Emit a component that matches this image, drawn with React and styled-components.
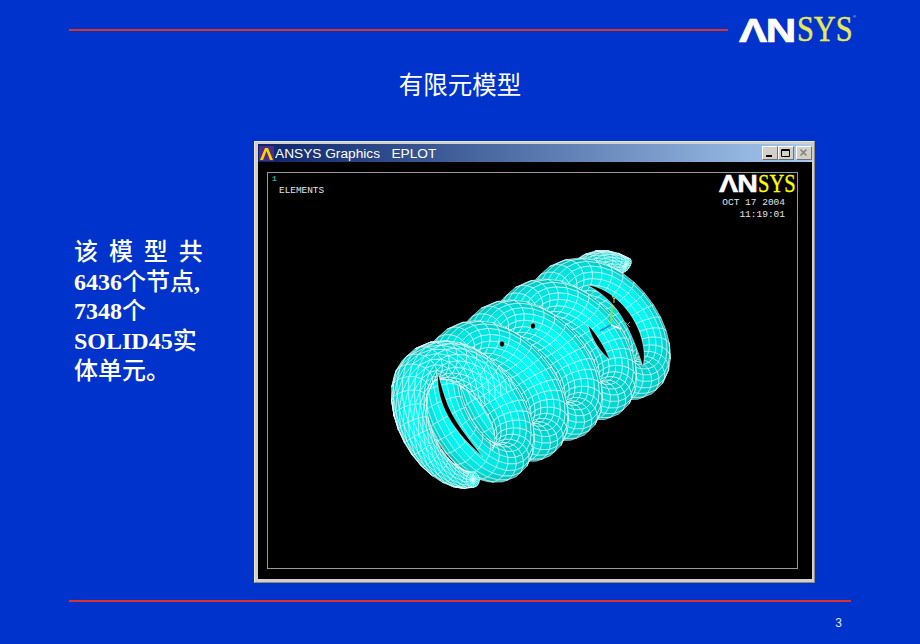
import React, { useMemo } from 'react';
import styled, { createGlobalStyle } from 'styled-components';

const GlobalStyle = createGlobalStyle`
  html, body {
    margin: 0;
    padding: 0;
    background: #0033cc;
  }
`;

const Slide = styled.div`
  width: 920px;
  height: 644px;
  overflow: hidden;
  box-sizing: border-box;
  background: #0033cc;
  padding: 17px 67px 0 69px;
  display: flex;
  flex-direction: column;
  color: #fff;
  font-family: "Liberation Serif", "Noto Sans CJK SC", serif;
`;

const Header = styled.div`
  display: flex;
  align-items: center;
  gap: 11px;
  height: 25px;
`;

const Rule = styled.div`
  height: 2px;
  background: #d8342c;
  flex: ${(p) => (p.$grow ? 1 : 'none')};
  width: ${(p) => (p.$grow ? 'auto' : '782px')};
`;

const LogoWrap = styled.div`
  display: flex;
  align-items: center;
  position: relative;
  font-size: ${(p) => p.$size}px;
  height: 1em;
  line-height: 1;
  margin-right: ${(p) => p.$inset}px;
`;

const LogoSans = styled.span`
  display: inline-block;
  width: 1.7em;
  font-family: "Liberation Sans", sans-serif;
  font-weight: bold;
  font-size: 1em;
  color: #fff;
  letter-spacing: -0.03em;
  -webkit-text-stroke: 0.02em #fff;
  transform: scaleX(1.24);
  transform-origin: left center;
`;

const LogoSerif = styled.span`
  display: inline-block;
  width: 1.57em;
  font-family: "Liberation Serif", serif;
  font-size: 1.05em;
  color: ${(p) => p.$color};
  -webkit-text-stroke: 0.012em ${(p) => p.$color};
  transform: scaleX(0.85);
  transform-origin: left center;
`;

const Reg = styled.span`
  position: absolute;
  left: 100%;
  top: 1px;
  font: 4px "Liberation Sans", sans-serif;
  color: #dfe89a;
`;

const SlideTitle = styled.div`
  margin-top: 27px;
  margin-right: 2px;
  height: 30px;
  line-height: 30px;
  text-align: center;
  font-size: 24.5px;
  font-family: "Noto Sans CJK SC", sans-serif;
`;

const Content = styled.div`
  margin-top: 42px;
  display: flex;
  align-items: flex-start;
`;

const Notes = styled.div`
  width: 185px;
  flex: none;
  box-sizing: border-box;
  padding: 97px 0 0 5px;
  font-size: 24px;
  font-weight: bold;
  line-height: 29.7px;
`;

const NoteLine = styled.div`
  height: 29.7px;
  white-space: nowrap;
  word-spacing: ${(p) => (p.$spread ? '4.9px' : 'normal')};
`;

const Cjk = styled.span`
  font-weight: 500;
`;

const Window = styled.div`
  width: 561px;
  height: 442px;
  flex: none;
  box-sizing: border-box;
  background: #d4d0c8;
  border: 1px solid #e8e6e0;
  border-right-color: #8c8a84;
  border-bottom-color: #8c8a84;
  padding: 2px 2px 3px 3px;
  display: flex;
  flex-direction: column;
`;

const TitleBar = styled.div`
  height: 18px;
  flex: none;
  display: flex;
  align-items: center;
  padding: 0 0 0 1px;
  background: linear-gradient(90deg, #0a246a 0%, #a6caf0 100%);
  color: #fff;
  font-family: "Liberation Sans", sans-serif;
  font-size: 13.7px;
`;

const TitleText = styled.span`
  margin-left: 1px;
  white-space: pre;
`;

const WinButtons = styled.div`
  margin-left: auto;
  display: flex;
`;

const WinButton = styled.div`
  width: 16px;
  height: 14px;
  box-sizing: border-box;
  margin-left: ${(p) => (p.$gap ? '2px' : '0')};
  background: #d4d0c8;
  border: 1px solid;
  border-color: #fff #707070 #707070 #fff;
  display: flex;
  align-items: center;
  justify-content: center;
`;

const Client = styled.div`
  flex: 1;
  min-height: 0;
  background: #000;
  padding: 10px 14px 10px 9px;
  display: flex;
`;

const Frame = styled.div`
  flex: 1;
  position: relative;
  border: 1px solid #9a9a9a;
  display: flex;
  justify-content: space-between;
  font-family: "Liberation Mono", monospace;
  font-size: 9.4px;
  line-height: 13px;
  color: #e4e4e4;
`;

const Canvas = styled.svg`
  position: absolute;
  left: -1px;
  top: -1px;
  width: 530px;
  height: 397px;
`;

const LeftLegend = styled.div`
  padding: 0 0 0 4px;
  position: relative;
`;

const Index = styled.div`
  color: #19b3a6;
  font-weight: bold;
  font-size: 8px;
  line-height: 9px;
  margin-top: 1px;
`;

const LegendLine = styled.div`
  margin: 1px 0 0 7px;
  font-size: 9.4px;
`;

const RightLegend = styled.div`
  position: relative;
  display: flex;
  flex-direction: column;
  align-items: flex-end;
`;

const DateBlock = styled.div`
  margin: 1px 12px 0 0;
  text-align: right;
  line-height: 12px;
  white-space: pre;
  font-size: 9.5px;
`;

const Footer = styled.div`
  margin-top: 17px;
`;

const PageNumber = styled.div`
  margin: 14px 0 0 0;
  padding-right: 9px;
  text-align: right;
  width: 782px;
  box-sizing: border-box;
  font-family: "Liberation Sans", sans-serif;
  font-size: 12px;
  line-height: 14px;
  color: #dfe8ff;
`;

// spring mesh, built in page coordinates of the reference
const c = 0.8;
const s = 0.6;
const AX = [0.853 * c, -0.521 * c, -s];
const UX = [0.521, 0.853, 0];
const VX = [0.853 * s, -0.521 * s, c];
const ORIGIN = [447, 424, 0];
const R = 62;
const TUBE_R = 19;
const TUBE_A = 21;
const PITCH = 50;
const TURNS = 5.6;
const PHASE = 0.03;

// closed ends: the pitch eases off over the first and last turn
const axial = (t) => {
  const head = (x) => (x < 1 ? 0.6 * x + 0.2 * x * x : x - 0.2);
  const tail = TURNS - t;
  if (tail < 1) return TURNS - 0.4 - (0.6 * tail + 0.2 * tail * tail);
  return head(t);
};

const taper = (t) => {
  const d = Math.min(t, TURNS - t);
  return 0.4 + 0.6 * Math.min(1, d / 0.4);
};

const point = (t, ph) => {
  const th = (t + PHASE) * 2 * Math.PI;
  const ct = Math.cos(th);
  const st = Math.sin(th);
  const k = taper(t);
  const along = PITCH * axial(t) + TUBE_A * k * Math.sin(ph);
  const rad = R + TUBE_R * k * Math.cos(ph);
  return [0, 1, 2].map((i) => ORIGIN[i] + AX[i] * along + UX[i] * rad * ct - VX[i] * rad * st);
};

const buildMesh = () => {
  const faces = [];
  const seg = Math.round(TURNS * 30);
  const around = 18;
  const add = (pts) => {
    const area = pts.reduce((a, p, i) => {
      const q = pts[(i + 1) % pts.length];
      return a + p[0] * q[1] - q[0] * p[1];
    }, 0);
    if (area <= 0) return;
    const z = pts.reduce((a, p) => a + p[2], 0) / pts.length;
    faces.push({ pts, z });
  };
  for (let i = 0; i < seg; i++) {
    const t0 = (TURNS * i) / seg;
    const t1 = (TURNS * (i + 1)) / seg;
    const nearEnd = i < 22 || i >= seg - 16;
    for (let j = 0; j < around; j++) {
      const p0 = (j * 2 * Math.PI) / around;
      const p1 = ((j + 1) * 2 * Math.PI) / around;
      const a = point(t0, p0);
      const b = point(t1, p0);
      const d = point(t1, p1);
      const e = point(t0, p1);
      if (nearEnd) {
        add([a, b, d]);
        add([a, d, e]);
      } else {
        add([a, b, d, e]);
      }
    }
  }
  [0, TURNS].forEach((t, idx) => {
    const mid = point(t, 0).map((v, k) => (v + point(t, Math.PI)[k]) / 2);
    for (let j = 0; j < around; j++) {
      const a = point(t, (j * 2 * Math.PI) / around);
      const b = point(t, ((j + 1) * 2 * Math.PI) / around);
      add(idx === 0 ? [mid, b, a] : [mid, a, b]);
    }
  });
  faces.sort((x, y) => x.z - y.z);
  return faces;
};

const faceGreen = (pts) => {
  // brightness from the face normal, seen from the viewer
  const a = pts[0];
  const b = pts[1];
  const d = pts[2];
  const u = [b[0] - a[0], b[1] - a[1], b[2] - a[2]];
  const v = [d[0] - a[0], d[1] - a[1], d[2] - a[2]];
  const nx = u[1] * v[2] - u[2] * v[1];
  const ny = u[2] * v[0] - u[0] * v[2];
  const nz = u[0] * v[1] - u[1] * v[0];
  const len = Math.hypot(nx, ny, nz) || 1;
  return Math.round(170 + 85 * Math.abs(nz / len));
};

const Spring = () => {
  const faces = useMemo(buildMesh, []);
  return (
    <g stroke="#eaffff" strokeWidth="0.6" strokeLinejoin="round">
      {faces.map((f, i) => {
        const g = faceGreen(f.pts);
        return (
          <polygon
            key={i}
            points={f.pts.map((p) => `${p[0].toFixed(1)},${p[1].toFixed(1)}`).join(' ')}
            fill={`rgb(0,${g},${g - 5})`}
          />
        );
      })}
    </g>
  );
};

// gaps between the coils where the black background shows through
const Slits = () => (
  <g fill="#000" stroke="#eaffff" strokeWidth="0.5">
    <path d="M438 373C436 395 445 425 483 457C470 440 452 420 445 397C442 388 440 380 438 373Z" />
    <path d="M587 285C605 286 630 305 640 333C645 348 645 358 643 367C636 345 628 325 617 310C608 298 597 290 587 285Z" />
    <path d="M588 325C592 340 600 352 610 360C604 345 596 333 588 325Z" />
    <ellipse cx="502" cy="344" rx="2.500" ry="3" />
    <ellipse cx="533" cy="326" rx="2.500" ry="3" />
  </g>
);

const Triad = () => (
  <g fill="none" strokeWidth="1.6">
    <line x1="611" y1="325" x2="612" y2="306" stroke="#8fe61a" />
    <line x1="611" y1="325" x2="600" y2="331" stroke="#1a8fe6" />
    <line x1="611" y1="325" x2="621" y2="329" stroke="#fff" />
    <path d="M612 296l2 3 3-3M614 299v4" stroke="#d8e060" strokeWidth="0.9" />
    <path d="M625 322l5 5M630 322l-5 5" stroke="#a09090" strokeWidth="0.9" />
  </g>
);

const Logo = ({ size, serifColor, inset = 0, reg }) => (
  <LogoWrap $size={size} $inset={inset}>
    <LogoSans>ΛN</LogoSans>
    <LogoSerif $color={serifColor}>SYS</LogoSerif>
    {reg && <Reg>®</Reg>}
  </LogoWrap>
);

const AppIcon = () => (
  <svg width="15" height="15" viewBox="0 0 15 15">
    <rect width="15" height="15" fill="#4f2a86" />
    <path d="M1 14L6 2h3l5 12h-3L7.500 5 4 14z" fill="#f5d800" />
  </svg>
);

export default function App() {
  return (
    <>
      <GlobalStyle />
      <Slide>
        <Header>
          <Rule $grow />
          <Logo size={34} serifColor="#e6e85c" reg />
        </Header>
        <SlideTitle>有限元模型</SlideTitle>
        <Content>
          <Notes>
            <NoteLine $spread><Cjk>该 模 型 共</Cjk></NoteLine>
            <NoteLine>6436<Cjk>个节点</Cjk>,</NoteLine>
            <NoteLine>7348<Cjk>个</Cjk></NoteLine>
            <NoteLine>SOLID45<Cjk>实</Cjk></NoteLine>
            <NoteLine><Cjk>体单元。</Cjk></NoteLine>
          </Notes>
          <Window>
            <TitleBar>
              <AppIcon />
              <TitleText>ANSYS Graphics   EPLOT</TitleText>
              <WinButtons>
                <WinButton>
                  <svg width="10" height="10" viewBox="0 0 10 10">
                    <rect x="1" y="7" width="6" height="2" fill="#000" />
                  </svg>
                </WinButton>
                <WinButton>
                  <svg width="10" height="10" viewBox="0 0 10 10">
                    <path d="M0.500 1.500h8v7h-8zM0.500 2.500h8" fill="none" stroke="#000" />
                  </svg>
                </WinButton>
                <WinButton $gap>
                  <svg width="10" height="10" viewBox="0 0 10 10">
                    <path d="M1.500 1.500l6 6M7.500 1.500l-6 6" stroke="#808080" strokeWidth="1.500" />
                  </svg>
                </WinButton>
              </WinButtons>
            </TitleBar>
            <Client>
              <Frame>
                <Canvas viewBox="267 172 530 397">
                  <Spring />
                  <Slits />
                  <Triad />
                </Canvas>
                <LeftLegend>
                  <Index>1</Index>
                  <LegendLine>ELEMENTS</LegendLine>
                </LeftLegend>
                <RightLegend>
                  <Logo size={23} inset={1} serifColor="#ffff00" />
                  <DateBlock>{'OCT 17 2004\n11:19:01'}</DateBlock>
                </RightLegend>
              </Frame>
            </Client>
          </Window>
        </Content>
        <Footer>
          <Rule />
          <PageNumber>3</PageNumber>
        </Footer>
      </Slide>
    </>
  );
}
